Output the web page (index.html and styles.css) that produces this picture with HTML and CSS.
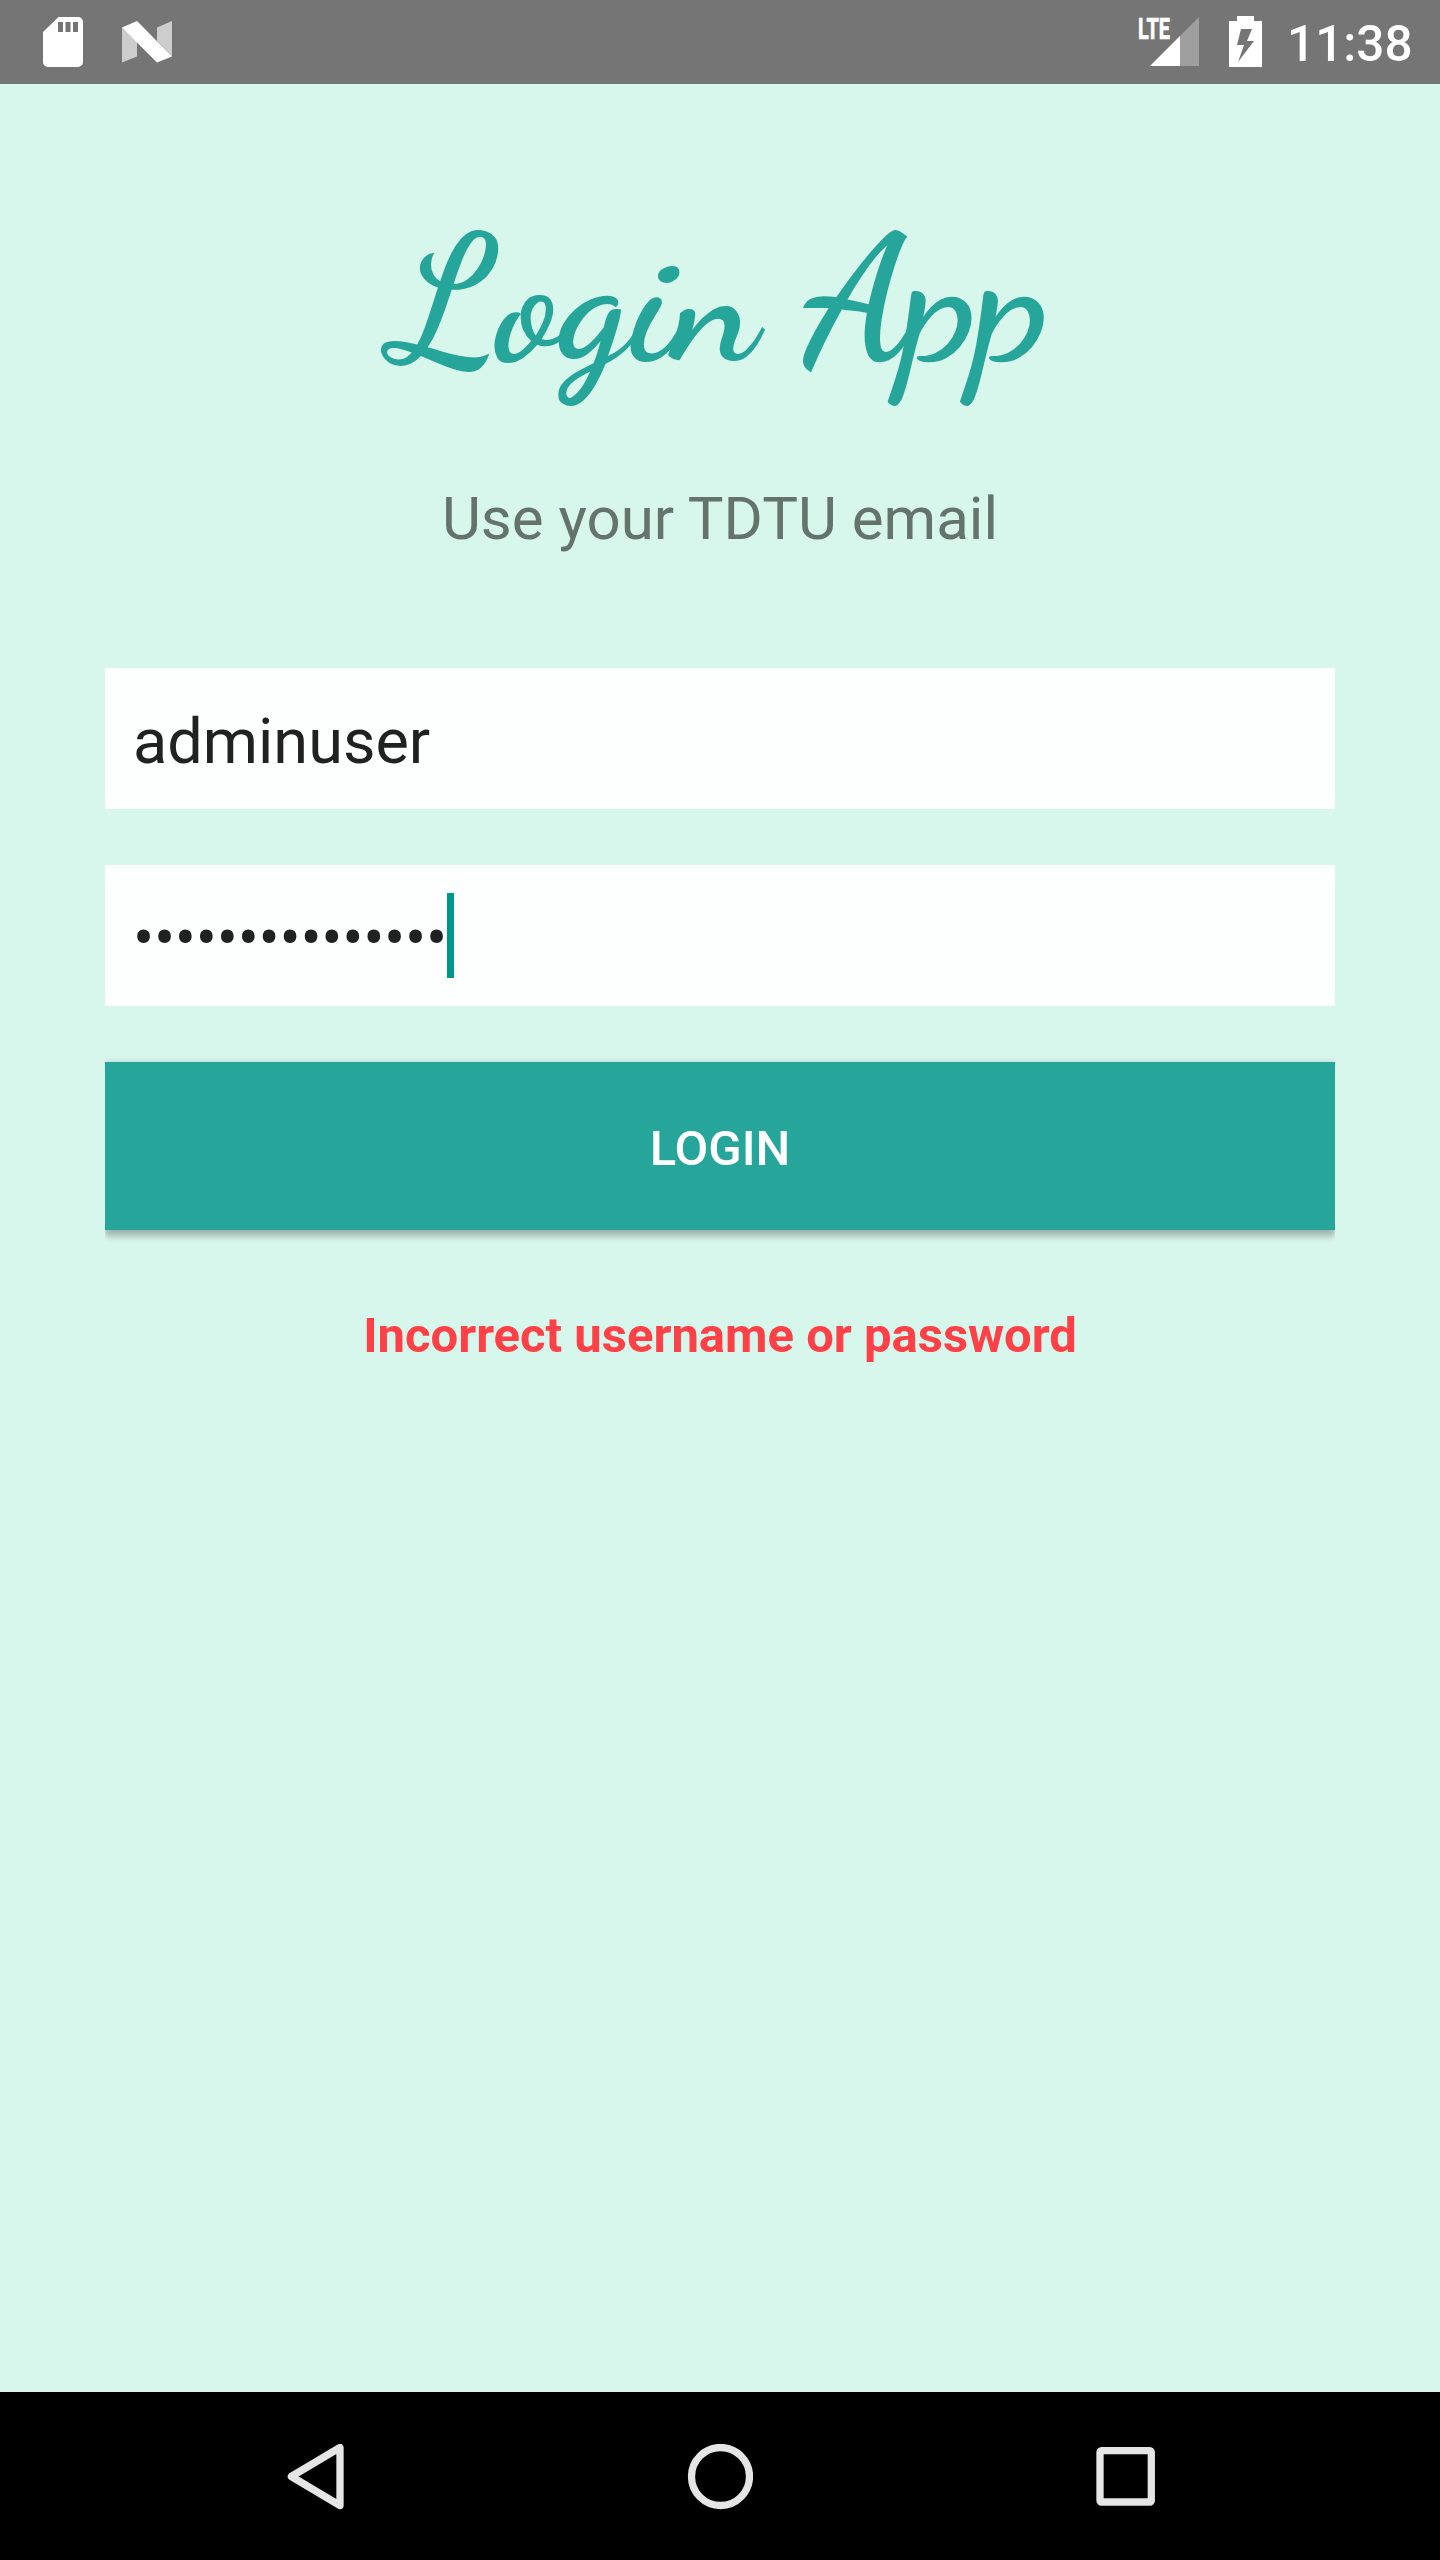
FILE: index.html
```html
<!DOCTYPE html>
<html lang="en">
<head>
<meta charset="utf-8">
<title>Login App</title>
<link rel="stylesheet" href="styles.css">
</head>
<body>
<header class="status-bar">
  <svg class="icon-sd" width="40" height="50" viewBox="0 0 40 50"><path fill="#fff" fill-rule="evenodd" d="M15.500 0H35a5 5 0 0 1 5 5V45a5 5 0 0 1-5 5H5a5 5 0 0 1-5-5V15ZM15 5V15h5V5ZM22.500 5V15h5V5ZM30 5V15h5V5Z"/></svg>
  <svg class="icon-n" width="50" height="42" viewBox="0 0 50 42"><path fill="#cdcdcd" d="M0 6.500 15 21V35.500L0 41.500ZM35 6.500 50 0V35.500L35 20Z"/><path fill="#fff" d="M0 6.500 15 0 50 35.500 35 41.500Z"/></svg>
  <span class="spacer"></span>
  <svg class="icon-signal" width="62" height="60" viewBox="0 -10 62 60"><path fill="#9f9f9f" d="M61 0V49H12Z"/><path fill="#fff" d="M42 19V49H12Z"/><text class="lte" x="0" y="22" textLength="32" lengthAdjust="spacingAndGlyphs">LTE</text></svg>
  <svg class="icon-battery" width="33" height="51" viewBox="0 0 33 51"><path fill="#fff" fill-rule="evenodd" d="M8 0H25V5H33V51H0V5H8ZM12 13 8 29H15L9 46 25 25H18L23 13Z"/></svg>
  <time class="clock">11:38</time>
</header>
<main class="screen">
  <h1 class="title">Login App</h1>
  <p class="subtitle">Use your TDTU email</p>
  <form class="form">
    <div class="field">adminuser</div>
    <div class="field"><span class="dots">•••••••••••••••</span><span class="caret"></span></div>
    <button class="login" type="button">LOGIN</button>
  </form>
  <p class="error">Incorrect username or password</p>
</main>
<nav class="nav-bar">
  <svg width="66" height="66" viewBox="0 0 66 66"><path d="M57 3.500V61.500L8.300 32.500Z"/></svg>
  <svg width="66" height="66" viewBox="0 0 66 66"><circle cx="33.500" cy="32.500" r="29"/></svg>
  <svg width="66" height="66" viewBox="0 0 66 66"><rect x="9" y="6.700" width="51.300" height="51.300" rx="1.500"/></svg>
</nav>
</body>
</html>
```
FILE: styles.css
```css
* { box-sizing: border-box; }
body {
  margin: 0;
  width: 1440px;
  height: 2560px;
  display: flex;
  flex-direction: column;
  background: #d8f7ec;
  font-family: Roboto, sans-serif;
  overflow: hidden;
}
.status-bar {
  height: 84px;
  flex: none;
  display: flex;
  align-items: flex-start;
  padding: 0 29px 0 43px;
  background: #757575;
}
.spacer { flex: 1; }
.icon-sd { margin-top: 17px; }
.icon-n { margin: 21px 0 0 39px; }
.icon-signal { margin-top: 7px; overflow: visible; }
.lte {
  font: 700 29px Roboto, sans-serif;
  fill: #fff;
  stroke: #fff;
  stroke-width: .7px;
}
.icon-battery { margin: 16px 0 0 29px; }
.clock {
  margin-left: 25px;
  width: 124px;
  font-size: 49.500px;
  font-weight: 500;
  line-height: 58px;
  padding-top: 15px;
  color: #fff;
  white-space: nowrap;
}
.screen {
  flex: 1;
  display: flex;
  flex-direction: column;
  align-items: center;
  padding: 0 105px;
}
.title {
  margin: 117px 0 0 1px;
  height: 200px;
  line-height: 200px;
  font-family: "Dancing Script", cursive;
  font-weight: 700;
  font-size: 175px;
  color: #26a69a;
  white-space: nowrap;
}
.subtitle {
  margin: 82px 0 0;
  font-size: 60px;
  line-height: 72px;
  color: #64736c;
}
.form {
  align-self: stretch;
  display: flex;
  flex-direction: column;
  gap: 56px;
  margin: 113px 0 0;
}
.field {
  height: 141px;
  display: flex;
  align-items: center;
  padding: 6px 28px 0;
  background: #fcfffe;
  color: #212121;
  font-size: 63px;
}
.dots { letter-spacing: -.33px; }
.caret {
  width: 7px;
  height: 85px;
  margin-top: -6px;
  background: #009688;
}
.login {
  height: 168px;
  border: 0;
  padding: 4px 0 0;
  background: #26a69a;
  color: #fff;
  font: 500 49px Roboto, sans-serif;
  box-shadow: 0 7px 6px 0 rgba(0, 0, 0, .22), 0 0 6px rgba(0, 0, 0, .16);
  clip-path: inset(-6px 0 -14px 0);
}
.error {
  margin: 77px 0 0;
  font-size: 49px;
  font-weight: 700;
  line-height: 58px;
  color: #ff4046;
}
.nav-bar {
  flex: none;
  height: 168px;
  display: flex;
  justify-content: space-between;
  align-items: center;
  padding: 2px 283px 0;
  background: #000;
}
.nav-bar path, .nav-bar circle, .nav-bar rect {
  fill: none;
  stroke: #e5e5e5;
  stroke-width: 7.3;
  stroke-linejoin: round;
}
```
